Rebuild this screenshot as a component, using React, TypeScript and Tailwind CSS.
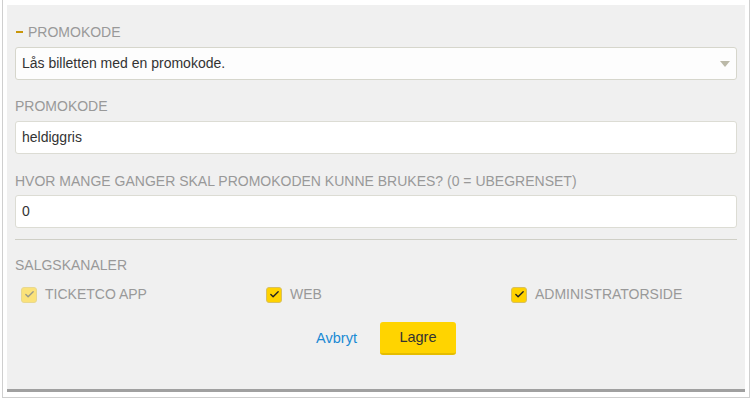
import { Check } from "lucide-react"

const font = { fontFamily: '"Liberation Sans", Arial, sans-serif' }

function Label({ children }: { children: React.ReactNode }) {
  return <div className="h-5 text-[14px] leading-5 uppercase text-[#999]">{children}</div>
}

function Checkbox({ label, disabled }: { label: string; disabled?: boolean }) {
  return (
    <label className="flex items-center gap-[8px] w-[245px] shrink-0">
      <span
        className={
          disabled
            ? "flex items-center justify-center w-4 h-4 rounded-[3px] bg-[#fbe27a] border border-[#e8d890]"
            : "flex items-center justify-center w-4 h-4 rounded-[3px] bg-[#ffd200] border border-[#d8c060]"
        }
      >
        <Check size={11} strokeWidth={3} className={disabled ? "text-[#9a9a8a]" : "text-[#222]"} />
      </span>
      <span className="text-[14px] text-[#999]">{label}</span>
    </label>
  )
}

export default function App() {
  return (
    <div className="w-[752px] h-[400px] bg-white overflow-hidden" style={font}>
      <div className="ml-[2px] w-[748px] h-[398px] border-l border-r border-b border-[#cfcfcf] pl-[4px] pt-[5px]">
        <div className="w-[738px] bg-[#f0f0f0] border-b-[3px] border-[#a0a0a0] px-[8px] pt-[17px] h-[387px] overflow-hidden">
          <div className="flex items-center h-5 text-[14px] leading-5 text-[#999]">
            <span className="w-[7px] h-[2px] bg-[#c8960a] ml-[1px] mr-[5px]" />
            PROMOKODE
          </div>
          <div className="mt-[5px] h-[33px] bg-[#fdfdfd] border border-[#d6d6cc] rounded-[3px] flex items-center justify-between pl-[6px] pr-[6px] text-[14px] text-[#333]">
            <span>Lås billetten med en promokode.</span>
            <span className="w-0 h-0 border-l-[5px] border-r-[5px] border-t-[6px] border-l-transparent border-r-transparent border-t-[#bbb9a8]" />
          </div>

          <div className="mt-[16px]">
            <Label>Promokode</Label>
          </div>
          <div className="mt-[5px] h-[33px] bg-white border border-[#dcdcd4] rounded-[3px] flex items-center pl-[6px] text-[14px] text-[#333]">
            heldiggris
          </div>

          <div className="mt-[17px]">
            <Label>Hvor mange ganger skal promokoden kunne brukes? (0 = ubegrenset)</Label>
          </div>
          <div className="mt-[4px] h-[33px] bg-white border border-[#dcdcd4] rounded-[3px] flex items-center pl-[6px] text-[14px] text-[#333]">
            0
          </div>

          <div className="mt-[11px] h-0 border-t border-[#cfcfc6]" />

          <div className="mt-[15px]">
            <Label>Salgskanaler</Label>
          </div>
          <div className="mt-[9px] flex pl-[6px]">
            <Checkbox label="TICKETCO APP" disabled />
            <Checkbox label="WEB" />
            <Checkbox label="ADMINISTRATORSIDE" />
          </div>

          <div className="mt-[17px] flex justify-center items-center gap-[23px] pl-[20px]">
            <span className="text-[14.5px] text-[#1a8ad4]">Avbryt</span>
            <button className="w-[76px] h-[33px] rounded-[3px] bg-[#ffd400] border-b-[2px] border-[#e5bd00] text-[14.5px] text-[#333]">
              Lagre
            </button>
          </div>
        </div>
      </div>
    </div>
  )
}
